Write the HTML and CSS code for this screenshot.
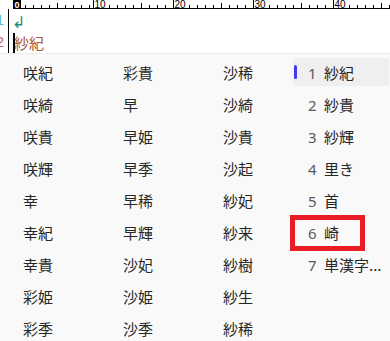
FILE: index.html
```html
<!DOCTYPE html>
<html lang="ja">
<head>
<meta charset="utf-8">
<link rel="stylesheet" href="styles.css">
</head>
<body>
<div class="editor">
  <svg class="ruler" width="390" height="9" viewBox="0 0 390 9">
    <line x1="13" y1="8.5" x2="390" y2="8.5" stroke="#000" stroke-width="1"/>
    <rect x="13" y="0" width="8" height="8" fill="#000"/>
    <text x="14.5" y="8" class="rn rn0">0</text>
    <g stroke="#000" stroke-width="1">
      <line x1="25.5" y1="5" x2="25.5" y2="8"/><line x1="33.5" y1="5" x2="33.5" y2="8"/><line x1="41.5" y1="5" x2="41.5" y2="8"/><line x1="49.5" y1="5" x2="49.5" y2="8"/><line x1="57.5" y1="3" x2="57.5" y2="8"/><line x1="65.5" y1="5" x2="65.5" y2="8"/><line x1="73.5" y1="5" x2="73.5" y2="8"/><line x1="81.5" y1="5" x2="81.5" y2="8"/><line x1="89.5" y1="5" x2="89.5" y2="8"/>
      <line x1="93.5" y1="0" x2="93.5" y2="8"/>
      <line x1="109.5" y1="5" x2="109.5" y2="8"/><line x1="117.5" y1="5" x2="117.5" y2="8"/><line x1="125.5" y1="5" x2="125.5" y2="8"/><line x1="133.5" y1="5" x2="133.5" y2="8"/><line x1="141.5" y1="3" x2="141.5" y2="8"/><line x1="149.5" y1="5" x2="149.5" y2="8"/><line x1="157.5" y1="5" x2="157.5" y2="8"/><line x1="165.5" y1="5" x2="165.5" y2="8"/>
      <line x1="173.5" y1="0" x2="173.5" y2="8"/>
      <line x1="189.5" y1="5" x2="189.5" y2="8"/><line x1="197.5" y1="5" x2="197.5" y2="8"/><line x1="205.5" y1="5" x2="205.5" y2="8"/><line x1="213.5" y1="5" x2="213.5" y2="8"/><line x1="221.5" y1="3" x2="221.5" y2="8"/><line x1="229.5" y1="5" x2="229.5" y2="8"/><line x1="237.5" y1="5" x2="237.5" y2="8"/><line x1="245.5" y1="5" x2="245.5" y2="8"/>
      <line x1="253.5" y1="0" x2="253.5" y2="8"/>
      <line x1="269.5" y1="5" x2="269.5" y2="8"/><line x1="277.5" y1="5" x2="277.5" y2="8"/><line x1="285.5" y1="5" x2="285.5" y2="8"/><line x1="293.5" y1="5" x2="293.5" y2="8"/><line x1="301.5" y1="3" x2="301.5" y2="8"/><line x1="309.5" y1="5" x2="309.5" y2="8"/><line x1="317.5" y1="5" x2="317.5" y2="8"/><line x1="325.5" y1="5" x2="325.5" y2="8"/>
      <line x1="333.5" y1="0" x2="333.5" y2="8"/>
      <line x1="349.5" y1="5" x2="349.5" y2="8"/><line x1="357.5" y1="5" x2="357.5" y2="8"/><line x1="365.5" y1="5" x2="365.5" y2="8"/><line x1="373.5" y1="5" x2="373.5" y2="8"/><line x1="381.5" y1="3" x2="381.5" y2="8"/><line x1="389.5" y1="5" x2="389.5" y2="8"/>
    </g>
    <text x="94.5" y="8" class="rn">10</text>
    <text x="174.5" y="8" class="rn">20</text>
    <text x="254.5" y="8" class="rn">30</text>
    <text x="334.5" y="8" class="rn">40</text>
  </svg>
  <div class="lines">
    <div class="gutter">
      <div class="ln ln1">1</div>
      <div class="ln ln2">2</div>
    </div>
    <div class="text">
      <div class="row row1"><span class="eol">↲</span></div>
      <div class="row row2"><span class="comp">紗紀</span></div>
    </div>
  </div>
</div>
<div class="popup">
  <div class="col c1">
    <div class="item">咲紀</div>
    <div class="item">咲綺</div>
    <div class="item">咲貴</div>
    <div class="item">咲輝</div>
    <div class="item">幸</div>
    <div class="item">幸紀</div>
    <div class="item">幸貴</div>
    <div class="item">彩姫</div>
    <div class="item">彩季</div>
  </div>
  <div class="col c2">
    <div class="item">彩貴</div>
    <div class="item">早</div>
    <div class="item">早姫</div>
    <div class="item">早季</div>
    <div class="item">早稀</div>
    <div class="item">早輝</div>
    <div class="item">沙妃</div>
    <div class="item">沙姫</div>
    <div class="item">沙季</div>
  </div>
  <div class="col c3">
    <div class="item">沙稀</div>
    <div class="item">沙綺</div>
    <div class="item">沙貴</div>
    <div class="item">沙起</div>
    <div class="item">紗妃</div>
    <div class="item">紗来</div>
    <div class="item">紗樹</div>
    <div class="item">紗生</div>
    <div class="item">紗稀</div>
  </div>
  <div class="col cands">
    <div class="cand selected"><span class="bar"></span><span class="num">1</span><span class="word">紗紀</span></div>
    <div class="cand"><span class="bar"></span><span class="num">2</span><span class="word">紗貴</span></div>
    <div class="cand"><span class="bar"></span><span class="num">3</span><span class="word">紗輝</span></div>
    <div class="cand"><span class="bar"></span><span class="num">4</span><span class="word">里き</span></div>
    <div class="cand"><span class="bar"></span><span class="num">5</span><span class="word">首</span></div>
    <div class="cand"><span class="bar"></span><span class="num">6</span><span class="word">崎</span></div>
    <div class="cand"><span class="bar"></span><span class="num">7</span><span class="word">単漢字...</span></div>
  </div>
  <div class="redbox"></div>
</div>
</body>
</html>
```

FILE: styles.css
```css
html, body {
  margin: 0;
  padding: 0;
  background: #ffffff;
  width: 390px;
  height: 341px;
  overflow: hidden;
  font-family: "Noto Sans CJK JP", "Noto Sans", sans-serif;
}

.editor {
  height: 53px;
  background: #ffffff;
}

.ruler {
  display: block;
}

.rn {
  font-family: "Liberation Sans", "DejaVu Sans", sans-serif;
  font-size: 10px;
  fill: #000;
}

.rn0 {
  fill: #ffffff;
  font-size: 9px;
  font-weight: bold;
}

.lines {
  display: flex;
  height: 44px;
}

.gutter {
  width: 8px;
  border-right: 1px solid #000;
  overflow: hidden;
  display: flex;
  flex-direction: column;
  align-items: flex-end;
}

.ln {
  font-family: "Liberation Sans", sans-serif;
  font-size: 15px;
  margin-right: 4px;
}

.ln1 {
  height: 20px;
  line-height: 21px;
  color: #5cb6e6;
}

.ln2 {
  height: 24px;
  line-height: 25px;
  color: #c06a6a;
}

.text {
  flex: 1;
}

.row1 {
  height: 20px;
  padding-left: 3px;
}

.eol {
  display: inline-block;
  color: #178a8a;
  font-family: "DejaVu Sans", sans-serif;
  font-size: 16px;
  line-height: 20px;
}

.row2 {
  height: 24px;
  padding-top: 1px;
  box-sizing: border-box;
  padding-left: 5px;
}

.comp {
  position: relative;
  display: inline-block;
  font-size: 15px;
  line-height: 20px;
  height: 20px;
  color: #a55a3c;
  border-bottom: 2px solid #7a0a0a;
}

.comp::before {
  content: "";
  position: absolute;
  left: -1px;
  top: 0;
  width: 2px;
  height: 20px;
  background: #000;
}

.popup {
  position: relative;
  display: flex;
  height: 288px;
  box-sizing: border-box;
  border-top: 1px solid #ececec;
  background: #f9f9f9;
  padding-top: 3px;
  padding-left: 23px;
}

.col {
  display: flex;
  flex-direction: column;
}

.c1, .c2 {
  width: 100px;
}

.c3 {
  width: 70px;
}

.item {
  height: 32px;
  line-height: 32px;
  font-size: 15px;
  color: #262626;
  white-space: nowrap;
}

.cands {
  width: 96px;
}

.cand {
  display: flex;
  align-items: center;
  height: 28px;
  margin: 1px 0 3px;
  border-radius: 4px;
  font-size: 15px;
  white-space: nowrap;
}

.cand.selected {
  background: #efefef;
}

.bar {
  width: 3px;
  height: 14px;
  margin-left: 1px;
  border-radius: 2px;
  background: transparent;
}

.selected .bar {
  background: #3d3df0;
}

.num {
  width: 16px;
  margin-left: 11px;
  color: #5a5a5a;
  font-family: "Noto Sans", sans-serif;
  line-height: 28px;
  padding-top: 2px;
}

.word {
  color: #262626;
  line-height: 28px;
  padding-top: 2px;
}

.redbox {
  position: absolute;
  left: 290px;
  top: 161px;
  width: 75px;
  height: 36px;
  box-sizing: border-box;
  border: 5px solid #e91e25;
}
```
